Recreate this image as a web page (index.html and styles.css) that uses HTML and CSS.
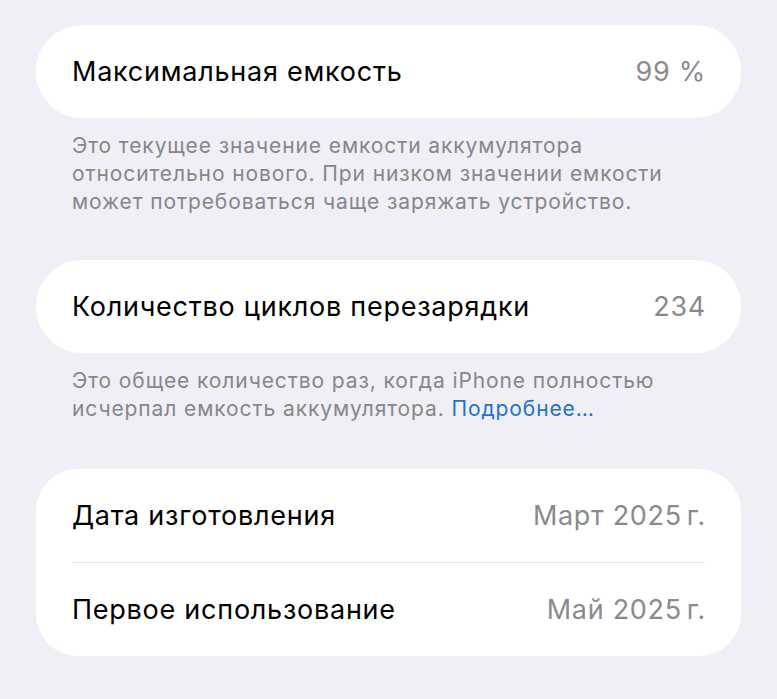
FILE: index.html
```html
<!DOCTYPE html>
<html lang="ru">
<head>
<meta charset="utf-8">
<title>Аккумулятор</title>
<link rel="stylesheet" href="styles.css">
</head>
<body>
<main class="page">
  <section class="group">
    <div class="card">
      <div class="row">
        <span class="label">Максимальная емкость</span>
        <span class="value">99 %</span>
      </div>
    </div>
    <p class="footer footer-tall">Это текущее значение емкости аккумулятора относительно нового. При низком значении емкости может потребоваться чаще заряжать устройство.</p>
  </section>

  <section class="group">
    <div class="card">
      <div class="row">
        <span class="label">Количество циклов перезарядки</span>
        <span class="value">234</span>
      </div>
    </div>
    <p class="footer">Это общее количество раз, когда iPhone полностью исчерпал емкость аккумулятора. <a class="link" href="#">Подробнее…</a></p>
  </section>

  <section class="group">
    <div class="card card-list">
      <div class="row">
        <span class="label">Дата изготовления</span>
        <span class="value">Март 2025&#8239;г.</span>
      </div>
      <div class="row">
        <span class="label">Первое использование</span>
        <span class="value">Май 2025&#8239;г.</span>
      </div>
    </div>
  </section>
</main>
</body>
</html>
```

FILE: styles.css
```css
html, body {
  margin: 0;
  padding: 0;
  background: #f0eff5;
}

body {
  font-family: Inter, "Noto Sans", "Liberation Sans", sans-serif;
  -webkit-font-smoothing: antialiased;
}

.page {
  display: flex;
  flex-direction: column;
  padding: 25px 36px 0;
  width: 705px;
}

.group {
  display: flex;
  flex-direction: column;
}

.card {
  background: #ffffff;
  border-radius: 46px;
}

.card-list {
  border-radius: 42px;
}

.row {
  height: 93px;
  margin: 0 36px;
  display: flex;
  align-items: center;
  justify-content: space-between;
  font-size: 27px;
  letter-spacing: 0.75px;
}

.card-list .row + .row {
  border-top: 1.5px solid #e3e3e8;
}

.label {
  color: #000000;
}

.value {
  color: #8a8a8e;
  letter-spacing: 0.7px;
  margin-right: -1px;
}

.footer {
  margin: 0;
  padding: 14px 36px 0;
  height: 116px;
  box-sizing: border-box;
  font-size: 21px;
  line-height: 28px;
  color: #86868b;
  letter-spacing: 0.9px;
}

.footer-tall {
  height: 142px;
}

.link {
  color: #1a74d4;
  text-decoration: none;
}
```
